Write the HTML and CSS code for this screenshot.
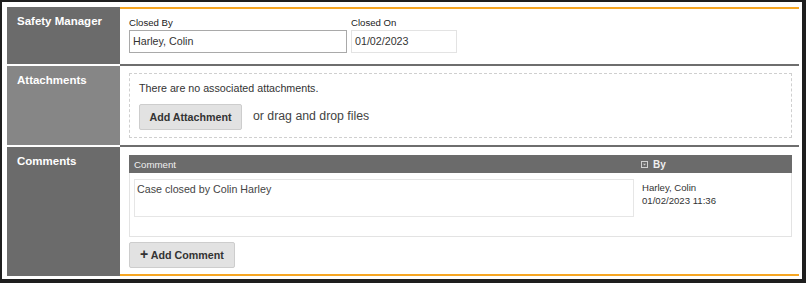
FILE: index.html
```html
<!DOCTYPE html>
<html lang="en">
<head>
  <meta charset="UTF-8" />
  <title>Case Closure</title>
  <link rel="stylesheet" href="styles.css">
</head>
<body>
  <div class="frame">
    <div class="panel">
      <!-- Safety Manager -->
      <div class="row row-first">
        <div class="label">Safety Manager</div>
        <div class="content manager">
          <div class="field">
            <span class="field-label">Closed By</span>
            <div class="input wide">Harley, Colin</div>
          </div>
          <div class="field">
            <span class="field-label">Closed On</span>
            <div class="input date">01/02/2023</div>
          </div>
        </div>
      </div>

      <!-- Attachments -->
      <div class="row">
        <div class="label light">Attachments</div>
        <div class="content attach">
          <div class="dropzone">
            <p class="empty">There are no associated attachments.</p>
            <div class="attach-actions">
              <button class="btn">Add Attachment</button>
              <span class="drag">or drag and drop files</span>
            </div>
          </div>
        </div>
      </div>

      <!-- Comments -->
      <div class="row row-last">
        <div class="label">Comments</div>
        <div class="content comments">
          <div class="table">
            <div class="thead">
              <span class="th-comment">Comment</span>
              <span class="th-by">
                <svg width="7" height="7" viewBox="0 0 7 7">
                  <rect x="0.5" y="0.5" width="6" height="6" fill="none" stroke="#d0d0d0" />
                  <path d="M2 2.8 L5 2.8 L3.5 4.6 Z" fill="#d0d0d0" />
                </svg>
                By
              </span>
            </div>
            <div class="tbody">
              <div class="comment-box">Case closed by Colin Harley</div>
              <div class="by">
                <div>Harley, Colin</div>
                <div>01/02/2023 11:36</div>
              </div>
            </div>
          </div>
          <button class="btn add-comment"><span class="plus">+</span> Add Comment</button>
        </div>
      </div>
    </div>
  </div>
</body>
</html>
```

FILE: styles.css
```css
html, body {
  margin: 0;
  padding: 0;
}
body {
  font-family: "Liberation Sans", Arial, sans-serif;
  color: #333;
  background: #1e1e1e;
}
.frame {
  box-sizing: border-box;
  width: 806px;
  height: 283px;
  border-style: solid;
  border-color: #1e1e1e;
  border-width: 2px 4px 4px 2px;
  padding: 5px 3px 3px 5px;
  background: #fff;
}
.row {
  display: grid;
  grid-template-columns: 113px 1fr;
}
.label {
  background: #6b6b6b;
  color: #fff;
  font-weight: bold;
  font-size: 11.5px;
  line-height: 14px;
  padding: 7px 10px;
  white-space: nowrap;
  border-bottom: 2px solid #fff;
}
.label.light {
  background: #868686;
}
.content {
  box-sizing: border-box;
  border-bottom: 2px solid #6e6e6e;
  padding: 0 7px 0 9px;
}
.row-first .content {
  border-top: 2px solid #f6a623;
}
.row-last .label {
  border-bottom: none;
}
.row-last .content {
  border-bottom: 2px solid #f6a623;
}

/* safety manager */
.manager {
  display: flex;
  gap: 4px;
  height: 59px;
  padding-top: 8px;
}
.field {
  display: flex;
  flex-direction: column;
}
.field-label {
  font-size: 9.6px;
  line-height: 12px;
  margin-bottom: 1px;
  color: #222;
}
.input {
  box-sizing: border-box;
  height: 23px;
  font-size: 10.7px;
  line-height: 21px;
  padding: 0 3px;
  color: #333;
}
.input.wide {
  width: 218px;
  border: 1px solid #a9a9a9;
}
.input.date {
  width: 106px;
  border: 1px solid #e3e3e3;
}

/* attachments */
.attach {
  height: 81px;
  padding-top: 7px;
}
.dropzone {
  border: 1px dashed #cfcfcf;
  height: 65px;
  box-sizing: border-box;
  padding: 8px 9px 0;
}
.empty {
  margin: 0 0 9px;
  font-size: 10.7px;
  line-height: 13px;
  color: #333;
}
.attach-actions {
  display: flex;
  align-items: center;
  gap: 11px;
}
.btn {
  font-family: inherit;
  font-weight: bold;
  font-size: 10.7px;
  color: #333;
  background: #e2e2e2;
  border: 1px solid #cdcdcd;
  border-radius: 2px;
  height: 26px;
  width: 103px;
  padding: 0;
  cursor: pointer;
}
.drag {
  font-size: 12.3px;
  color: #444;
  padding-bottom: 2px;
}

/* comments */
.comments {
  padding-top: 8px;
  height: 129px;
}
.table {
  display: flex;
  flex-direction: column;
}
.thead {
  display: flex;
  background: #6b6b6b;
  color: #f0f0f0;
  font-size: 9.7px;
  height: 18px;
  align-items: center;
}
.th-comment {
  width: 507px;
  padding-left: 5px;
}
.th-by {
  display: flex;
  align-items: center;
  gap: 5px;
  font-weight: bold;
  font-size: 10px;
}
.tbody {
  display: flex;
  border: 1px solid #e3e3e3;
  border-top: none;
  height: 64px;
  box-sizing: border-box;
  padding: 6px 4px;
  gap: 8px;
}
.comment-box {
  width: 500px;
  height: 38px;
  box-sizing: border-box;
  border: 1px solid #e6e6e6;
  font-size: 10.7px;
  line-height: 13px;
  padding: 3px 2px;
  color: #444;
}
.by {
  font-size: 9.6px;
  line-height: 13.3px;
  color: #333;
  padding-top: 2px;
}
.add-comment {
  margin-top: 5px;
  width: 106px;
  height: 26px;
}
.plus {
  font-size: 14px;
  line-height: 10px;
}
```
